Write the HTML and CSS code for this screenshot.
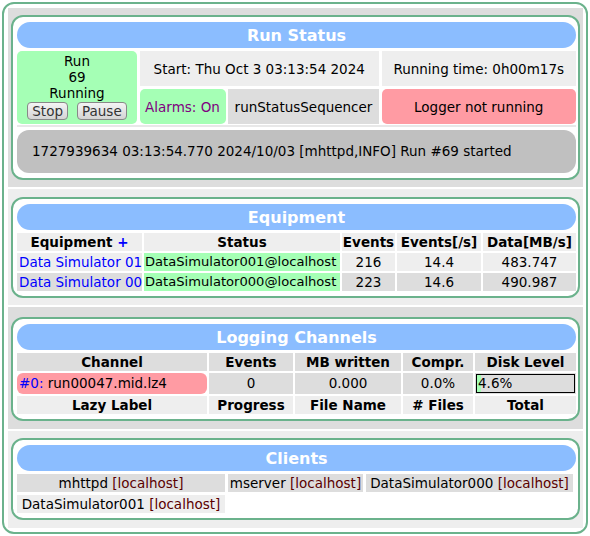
FILE: index.html
```html
<!DOCTYPE html>
<html>
<head>
<meta charset="utf-8">
<title>Status</title>
<link rel="stylesheet" href="styles.css">
</head>
<body>
<div class="page">
  <div class="row dark r1">
    <section class="box">
      <div class="title">Run Status</div>
      <div class="rs-grid">
        <div class="cell green run">Run<br>69<br>Running
          <div class="btns"><button class="btn">Stop</button><button class="btn">Pause</button></div>
        </div>
        <div class="cell light span2">Start: Thu Oct 3 03:13:54 2024</div>
        <div class="cell light">Running time: 0h00m17s</div>
        <div class="cell green alarms">Alarms: On</div>
        <div class="cell grey">runStatusSequencer</div>
        <div class="cell red">Logger not running</div>
      </div>
      <div class="sep"></div>
      <div class="msg">1727939634 03:13:54.770 2024/10/03 [mhttpd,INFO] Run #69 started</div>
    </section>
  </div>

  <div class="row light r2">
    <section class="box">
      <div class="title">Equipment</div>
      <div class="tgrid eq">
        <div class="th light">Equipment <span class="plus">+</span></div>
        <div class="th light">Status</div>
        <div class="th light">Events</div>
        <div class="th light">Events[/s]</div>
        <div class="th light">Data[MB/s]</div>

        <div class="td light left"><a class="link">Data Simulator 01</a></div>
        <div class="td green left status">DataSimulator001@localhost</div>
        <div class="td light">216</div>
        <div class="td light">14.4</div>
        <div class="td light">483.747</div>

        <div class="td grey left"><a class="link">Data Simulator 00</a></div>
        <div class="td green left status">DataSimulator000@localhost</div>
        <div class="td grey">223</div>
        <div class="td grey">14.6</div>
        <div class="td grey">490.987</div>
      </div>
    </section>
  </div>

  <div class="row dark r3">
    <section class="box">
      <div class="title">Logging Channels</div>
      <div class="tgrid lg">
        <div class="th grey">Channel</div>
        <div class="th grey">Events</div>
        <div class="th grey">MB written</div>
        <div class="th grey">Compr.</div>
        <div class="th grey">Disk Level</div>

        <div class="td tall red left chan"><a class="link">#0:</a> run00047.mid.lz4</div>
        <div class="td tall grey">0</div>
        <div class="td tall grey">0.000</div>
        <div class="td tall grey">0.0%</div>
        <div class="td tall grey diskcell"><div class="disk" style="--level:4.6%">4.6%</div></div>

        <div class="th light">Lazy Label</div>
        <div class="th light">Progress</div>
        <div class="th light">File Name</div>
        <div class="th light"># Files</div>
        <div class="th light">Total</div>
      </div>
    </section>
  </div>

  <div class="row light r4">
    <section class="box">
      <div class="title">Clients</div>
      <div class="tgrid cl">
        <div class="td grey">mhttpd <span class="host">[localhost]</span></div>
        <div class="td grey">mserver <span class="host">[localhost]</span></div>
        <div class="td grey">DataSimulator000 <span class="host">[localhost]</span></div>
        <div class="td light">DataSimulator001 <span class="host">[localhost]</span></div>
      </div>
    </section>
  </div>
</div>
</body>
</html>
```

FILE: styles.css
```css
html, body {
  margin: 0;
  padding: 0;
  background: #fff;
}
body {
  font-family: "DejaVu Sans", Verdana, sans-serif;
  font-size: 13.5px;
  color: #000;
}
.page {
  margin: 2px;
  width: 586px;
  box-sizing: border-box;
  border: 2px solid #6bb28c;
  border-radius: 12px;
  background: #fff;
  padding: 4px 3px 4px 4px;
  display: flex;
  flex-direction: column;
  gap: 2px;
}
.row {
  padding: 7px 3px 7px 3px;
}
.row.dark { background: #dddddd; }
.row.light { background: #eeeeee; }
.r2 { padding-top: 8px; }
.r3 { padding-top: 10px; padding-bottom: 8px; }
.r4 { padding-bottom: 8px; }

.box {
  border: 2px solid #6bb28c;
  border-radius: 12px;
  background: #fff;
  padding: 5px 2px 5px 4px;
}
.title {
  height: 26px;
  line-height: 27px;
  background: #8bbdff;
  border-radius: 13px;
  color: #fff;
  font-weight: bold;
  font-size: 16px;
  text-align: center;
}

.cell {
  display: flex;
  align-items: center;
  justify-content: center;
}
.green { background: #a5ffb5; }
.red { background: #ff9ba3; }
.light { background: #eeeeee; }
.grey { background: #dddddd; }

.rs-grid {
  margin-top: 3px;
  display: grid;
  grid-template-columns: 120px 86px 151px 1fr;
  grid-template-rows: 35px 35px;
  column-gap: 2.5px;
  row-gap: 3px;
}
.run {
  grid-row: span 2;
  display: block;
  text-align: center;
  padding-top: 2px;
  line-height: 16px;
  border-radius: 5px;
}
.span2 { grid-column: span 2; }
.alarms { color: #800080; border-radius: 5px; }
.cell.red { border-radius: 5px; }
.btns {
  margin-top: 1px;
  display: flex;
  justify-content: center;
  gap: 9px;
}
.btn {
  font-family: "DejaVu Sans", Verdana, sans-serif;
  font-size: 13.5px;
  color: #333;
  height: 18px;
  line-height: 14px;
  padding: 0 4px;
  border: 1px solid #888;
  border-radius: 4px;
  background: linear-gradient(#f4f4f4, #d4d4d4);
}
.sep {
  height: 2px;
  margin: 1px 0 3px 0;
  background: #e8e8e8;
}
.msg {
  height: 43px;
  line-height: 43px;
  background: #c0c0c0;
  border-radius: 12px;
  padding-left: 15px;
}

.tgrid {
  margin-top: 3px;
  display: grid;
  gap: 2px;
}
.eq { grid-template-columns: 125px 196px 53px 84px 1fr; }
.lg { grid-template-columns: 190px 84px 106px 70px 1fr; }
.cl { grid-template-columns: 208px 135px 207px; gap: 3px; }
.th, .td {
  height: 18px;
  line-height: 18px;
  text-align: center;
  white-space: nowrap;
  overflow: hidden;
}
.th { font-weight: bold; }
.td.left { text-align: left; padding-left: 2px; }
.td.status { font-size: 13.1px; padding-left: 1px; }
.td.tall { height: 21px; line-height: 21px; }
.chan { border-radius: 6px; }
.link { color: #0000ff; }
.plus { color: #0000ff; }
.host { color: #5a0000; }

.diskcell {
  padding: 1px 1px 1px 1px;
  box-sizing: border-box;
}
.disk {
  height: 19px;
  box-sizing: border-box;
  border: 1px solid #000;
  line-height: 17px;
  text-align: left;
  padding-left: 1px;
  background: linear-gradient(to right, #a5ffb5 var(--level), #dddddd var(--level));
}
```
